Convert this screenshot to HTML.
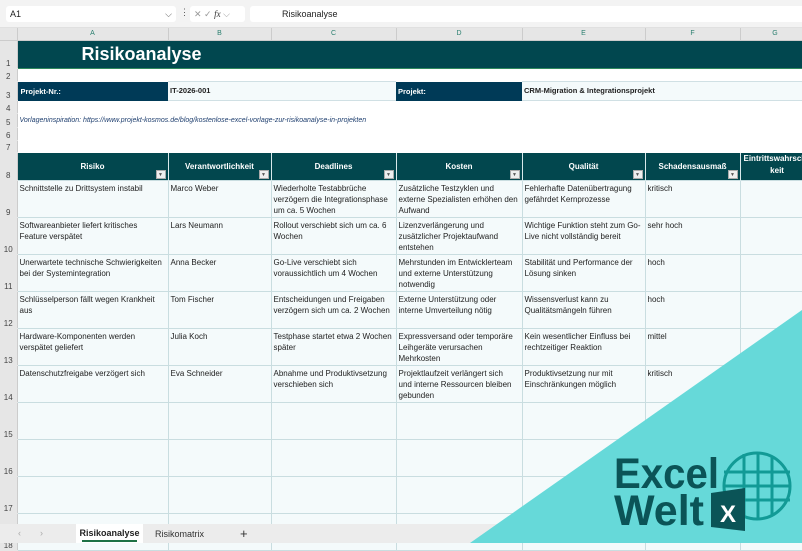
<!DOCTYPE html>
<html><head><meta charset="utf-8">
<style>
*{margin:0;padding:0;box-sizing:border-box}
body{width:802px;height:543px;overflow:hidden;background:#fff;font-family:"Liberation Sans",sans-serif;position:relative}
.tb{position:absolute;left:0;top:0;width:802px;height:28px;background:#f3f3f3;border-bottom:1px solid #e0e0e0}
.nb{position:absolute;left:6px;top:6px;width:170px;height:16px;background:#fff;border-radius:3px;font-size:9px;line-height:16px;padding-left:4px;color:#222}
.fx{position:absolute;left:190px;top:6px;width:55px;height:16px;background:#fff;border-radius:3px;font-size:9px;line-height:16px;color:#999;padding-left:4px}
.fb{position:absolute;left:250px;top:6px;width:560px;height:16px;background:#fff;border-radius:3px;font-size:9px;line-height:16px;color:#222;padding-left:32px}
table{position:absolute;left:0;top:28px;border-collapse:collapse;table-layout:fixed;width:810px}
td{padding:0;font-size:8px;color:#222;vertical-align:top;overflow:hidden;white-space:nowrap}
td.rh{background:#e6e6e6;color:#444;font-size:8px;text-align:center;vertical-align:bottom;border-right:1px solid #ccc;border-bottom:1px solid #e6e6e6}
tr.ch td{background:#e6e6e6;color:#2a7f6f;text-align:center;font-size:7px;line-height:12px;border-right:1px solid #ccc;border-bottom:1px solid #ccc}
.d td.c{background:#f4fafb;border:1px solid #c9dde0}
.d td.c>div{height:36px;overflow:hidden;padding:2px 0 0 2px;line-height:11px;font-size:8px;white-space:nowrap}
.h td.c{background:#02474e;color:#fff;font-weight:bold;text-align:center;vertical-align:middle;border-right:1px solid #d8e8ea;position:relative;font-size:8px}
.fl{position:absolute;right:2px;bottom:1px;width:10px;height:9px;background:#eee;border:1px solid #aaa;color:#555;font-size:5px;line-height:8px;text-align:center}
.tab{position:absolute;left:0;top:524px;width:802px;height:19px;background:#ececec;font-size:9px;z-index:2}
svg{z-index:3}
</style></head><body>
<div class="tb"><div class="nb">A1<span style="position:absolute;right:4px;color:#555">⌵</span></div>
<span style="position:absolute;left:180px;top:7px;font-size:9px;color:#555">⋮</span>
<div class="fx">✕ ✓ <i style="color:#333;font-family:'Liberation Serif',serif">fx</i> ⌵</div>
<div class="fb">Risikoanalyse</div></div>
<table>
<colgroup><col style="width:17px"><col style="width:151px"><col style="width:103px"><col style="width:125px"><col style="width:126px"><col style="width:123px"><col style="width:95px"><col style="width:70px"></colgroup>
<tr class="ch" style="height:12px"><td style="background:#e6e6e6"></td><td>A</td><td>B</td><td>C</td><td>D</td><td>E</td><td>F</td><td>G</td></tr>
<tr style="height:28px"><td class="rh">1</td><td colspan="7" style="background:#01474f;border:1px solid #2f8a5e;color:#fff;font-weight:bold;font-size:18px;line-height:26px;padding-left:64px">Risikoanalyse</td></tr>
<tr style="height:13px"><td class="rh">2</td><td colspan="7"></td></tr>
<tr style="height:19px"><td class="rh">3</td><td style="background:#003a57;color:#fff;font-weight:bold;font-size:7.5px;line-height:19px;padding-left:3px">Projekt-Nr.:</td><td colspan="2" style="background:#f4fafb;border-top:1px solid #d0e0e4;border-bottom:1px solid #d0e0e4;font-weight:bold;font-size:7.5px;line-height:17px;padding-left:2px">IT-2026-001</td><td style="background:#003a57;color:#fff;font-weight:bold;font-size:7.5px;line-height:19px;padding-left:2px">Projekt:</td><td colspan="3" style="background:#f4fafb;border-top:1px solid #d0e0e4;border-bottom:1px solid #d0e0e4;font-weight:bold;font-size:7.5px;line-height:17px;padding-left:2px">CRM-Migration &amp; Integrationsprojekt</td></tr>
<tr style="height:13px"><td class="rh">4</td><td colspan="7"></td></tr>
<tr style="height:14px"><td class="rh">5</td><td colspan="7" style="font-style:italic;color:#1f3f6f;font-size:7px;line-height:14px;padding-left:2px">Vorlageninspiration: https://www.projekt-kosmos.de/blog/kostenlose-excel-vorlage-zur-risikoanalyse-in-projekten</td></tr>
<tr style="height:13px"><td class="rh">6</td><td colspan="7"></td></tr>
<tr style="height:12px"><td class="rh">7</td><td colspan="7"></td></tr>
<tr class="h" style="height:28px"><td class="rh">8</td><td class="c">Risiko<span class="fl">▼</span></td><td class="c">Verantwortlichkeit<span class="fl">▼</span></td><td class="c">Deadlines<span class="fl">▼</span></td><td class="c">Kosten<span class="fl">▼</span></td><td class="c">Qualität<span class="fl">▼</span></td><td class="c">Schadensausmaß<span class="fl">▼</span></td><td class="c" style="vertical-align:top;line-height:12px;text-align:left;padding-left:3px">Eintrittswahrsch<br>&nbsp;&nbsp;&nbsp;&nbsp;&nbsp;&nbsp;&nbsp;&nbsp;&nbsp;&nbsp;&nbsp;&nbsp;keit</td></tr>
<tr class="d"><td class="rh">9</td><td class="c"><div>Schnittstelle zu Drittsystem instabil</div></td><td class="c"><div>Marco Weber</div></td><td class="c"><div>Wiederholte Testabbrüche<br>verzögern die Integrationsphase<br>um ca. 5 Wochen</div></td><td class="c"><div>Zusätzliche Testzyklen und<br>externe Spezialisten erhöhen den<br>Aufwand</div></td><td class="c"><div>Fehlerhafte Datenübertragung<br>gefährdet Kernprozesse</div></td><td class="c"><div>kritisch</div></td><td class="c"><div></div></td></tr>
<tr class="d"><td class="rh">10</td><td class="c"><div>Softwareanbieter liefert kritisches<br>Feature verspätet</div></td><td class="c"><div>Lars Neumann</div></td><td class="c"><div>Rollout verschiebt sich um ca. 6<br>Wochen</div></td><td class="c"><div>Lizenzverlängerung und<br>zusätzlicher Projektaufwand<br>entstehen</div></td><td class="c"><div>Wichtige Funktion steht zum Go-<br>Live nicht vollständig bereit</div></td><td class="c"><div>sehr hoch</div></td><td class="c"><div></div></td></tr>
<tr class="d"><td class="rh">11</td><td class="c"><div>Unerwartete technische Schwierigkeiten<br>bei der Systemintegration</div></td><td class="c"><div>Anna Becker</div></td><td class="c"><div>Go-Live verschiebt sich<br>voraussichtlich um 4 Wochen</div></td><td class="c"><div>Mehrstunden im Entwicklerteam<br>und externe Unterstützung<br>notwendig</div></td><td class="c"><div>Stabilität und Performance der<br>Lösung sinken</div></td><td class="c"><div>hoch</div></td><td class="c"><div></div></td></tr>
<tr class="d"><td class="rh">12</td><td class="c"><div>Schlüsselperson fällt wegen Krankheit<br>aus</div></td><td class="c"><div>Tom Fischer</div></td><td class="c"><div>Entscheidungen und Freigaben<br>verzögern sich um ca. 2 Wochen</div></td><td class="c"><div>Externe Unterstützung oder<br>interne Umverteilung nötig</div></td><td class="c"><div>Wissensverlust kann zu<br>Qualitätsmängeln führen</div></td><td class="c"><div>hoch</div></td><td class="c"><div></div></td></tr>
<tr class="d"><td class="rh">13</td><td class="c"><div>Hardware-Komponenten werden<br>verspätet geliefert</div></td><td class="c"><div>Julia Koch</div></td><td class="c"><div>Testphase startet etwa 2 Wochen<br>später</div></td><td class="c"><div>Expressversand oder temporäre<br>Leihgeräte verursachen<br>Mehrkosten</div></td><td class="c"><div>Kein wesentlicher Einfluss bei<br>rechtzeitiger Reaktion</div></td><td class="c"><div>mittel</div></td><td class="c"><div></div></td></tr>
<tr class="d"><td class="rh">14</td><td class="c"><div>Datenschutzfreigabe verzögert sich</div></td><td class="c"><div>Eva Schneider</div></td><td class="c"><div>Abnahme und Produktivsetzung<br>verschieben sich</div></td><td class="c"><div>Projektlaufzeit verlängert sich<br>und interne Ressourcen bleiben<br>gebunden</div></td><td class="c"><div>Produktivsetzung nur mit<br>Einschränkungen möglich</div></td><td class="c"><div>kritisch</div></td><td class="c"><div></div></td></tr>
<tr class="d"><td class="rh">15</td><td class="c"><div></div></td><td class="c"><div></div></td><td class="c"><div></div></td><td class="c"><div></div></td><td class="c"><div></div></td><td class="c"><div></div></td><td class="c"><div></div></td></tr>
<tr class="d"><td class="rh">16</td><td class="c"><div></div></td><td class="c"><div></div></td><td class="c"><div></div></td><td class="c"><div></div></td><td class="c"><div></div></td><td class="c"><div></div></td><td class="c"><div></div></td></tr>
<tr class="d"><td class="rh">17</td><td class="c"><div></div></td><td class="c"><div></div></td><td class="c"><div></div></td><td class="c"><div></div></td><td class="c"><div></div></td><td class="c"><div></div></td><td class="c"><div></div></td></tr>
<tr class="d"><td class="rh">18</td><td class="c"><div></div></td><td class="c"><div></div></td><td class="c"><div></div></td><td class="c"><div></div></td><td class="c"><div></div></td><td class="c"><div></div></td><td class="c"><div></div></td></tr>
</table>
<div class="tab">
<span style="position:absolute;left:18px;top:4px;color:#aaa">‹</span><span style="position:absolute;left:40px;top:4px;color:#aaa">›</span>
<div style="position:absolute;left:76px;top:0;width:67px;height:19px;background:#fff;font-weight:bold;text-align:center;line-height:18px;color:#222">Risikoanalyse<div style="position:absolute;left:6px;right:6px;bottom:1px;height:2px;background:#1e7145"></div></div>
<span style="position:absolute;left:155px;top:5px;color:#333">Risikomatrix</span>
<span style="position:absolute;left:240px;top:2px;font-size:13px;color:#333">+</span>
</div>
<svg style="position:absolute;left:0;top:0" width="802" height="543">
<polygon points="802,310 802,543 470,543" fill="#66d9d9"/>
<text x="614" y="488" font-family="Liberation Sans,sans-serif" font-weight="bold" font-size="43" fill="#0b5457" textLength="105" lengthAdjust="spacingAndGlyphs">Excel</text>
<text x="614" y="525" font-family="Liberation Sans,sans-serif" font-weight="bold" font-size="43" fill="#0b5457" textLength="90" lengthAdjust="spacingAndGlyphs">Welt</text>
<g stroke="#129a96" stroke-width="3" fill="none">
<circle cx="757" cy="486" r="33"/>
<line x1="724" y1="472" x2="790" y2="472"/><line x1="724" y1="486" x2="790" y2="486"/><line x1="724" y1="500" x2="790" y2="500"/>
<line x1="744" y1="454" x2="744" y2="518"/><line x1="758" y1="453" x2="758" y2="519"/><line x1="772" y1="456" x2="772" y2="516"/>
</g>
<polygon points="711,493 745,488 745,531 711,527" fill="#0b5457"/>
<text x="728" y="522" text-anchor="middle" font-family="Liberation Sans,sans-serif" font-weight="bold" font-size="24" fill="#fff">X</text>
</svg>
</body></html>
